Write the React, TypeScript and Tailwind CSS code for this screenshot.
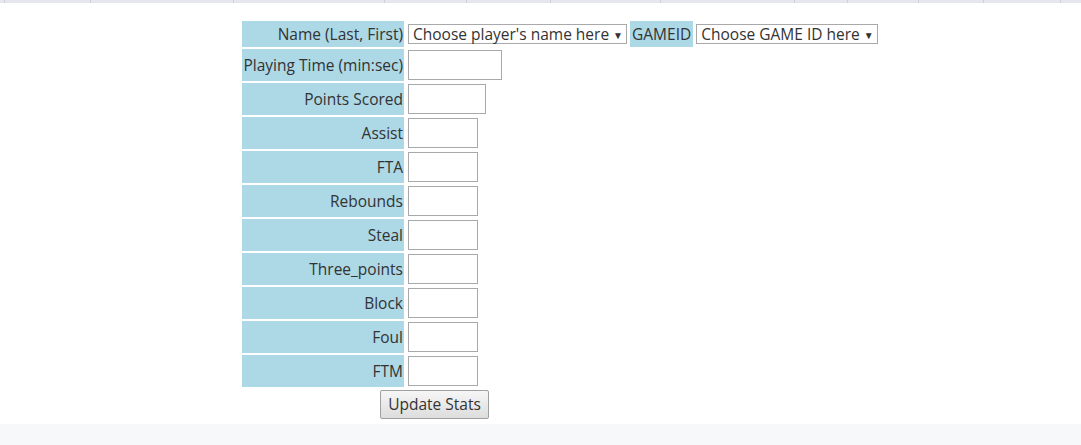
import { useState } from 'react'

const statRows = [
  { label: 'Playing Time (min:sec)', width: 'w-[94px]' },
  { label: 'Points Scored', width: 'w-[78px]' },
  { label: 'Assist', width: 'w-[70px]' },
  { label: 'FTA', width: 'w-[70px]' },
  { label: 'Rebounds', width: 'w-[70px]' },
  { label: 'Steal', width: 'w-[70px]' },
  { label: 'Three_points', width: 'w-[70px]' },
  { label: 'Block', width: 'w-[70px]' },
  { label: 'Foul', width: 'w-[70px]' },
  { label: 'FTM', width: 'w-[70px]' },
]

const tabStops = [4, 90, 233, 384, 466, 550, 660, 794, 847, 918, 983, 1060]

export default function App() {
  const [values, setValues] = useState<Record<string, string>>({})

  return (
    <div className="flex min-h-[445px] flex-col bg-white font-['Open_Sans',sans-serif] text-[15.5px] text-[#333]">
      {/* Top strip */}
      <div className="relative h-[3px] bg-[#e6e6ef]">
        {tabStops.map((x) => (
          <div
            key={x}
            className="absolute top-0 h-[3px] w-px bg-[#d0d0dc]"
            style={{ left: x }}
          />
        ))}
      </div>

      <div className="pl-[240px] pt-[16px]">
        <table className="border-separate border-spacing-[2px]">
          <tbody>
            <tr>
              <td className="h-[26px] w-[162px] bg-[#add8e6] p-0 pr-[1px] pt-[2px] text-right leading-none">
                Name (Last, First)
              </td>
              <td className="p-0 pl-[2px]">
                <div className="flex items-center gap-[3px]">
                  <button className="flex h-[20px] items-center gap-[4px] border border-[#a9a9a9] bg-white pl-[4px] pr-[3px] pt-[1px] leading-none">
                    Choose player's name here
                    <span className="text-[10px]">▼</span>
                  </button>
                  <span className="flex h-[26px] items-center bg-[#add8e6] px-[2px] pt-[2px] leading-none">
                    GAMEID
                  </span>
                  <button className="ml-[0px] flex h-[20px] items-center gap-[4px] border border-[#a9a9a9] bg-white pl-[4px] pr-[3px] pt-[1px] leading-none">
                    Choose GAME ID here
                    <span className="text-[10px]">▼</span>
                  </button>
                </div>
              </td>
            </tr>
            {statRows.map((row) => (
              <tr key={row.label}>
                <td className="h-[32px] bg-[#add8e6] p-0 pr-[1px] pt-[2px] text-right leading-none">
                  {row.label}
                </td>
                <td className="p-0 pl-[2px]">
                  <input
                    value={values[row.label] ?? ''}
                    onChange={(e) =>
                      setValues({ ...values, [row.label]: e.target.value })
                    }
                    className={`${row.width} block h-[30px] border border-[#a9a9a9] bg-white px-1 outline-none`}
                  />
                </td>
              </tr>
            ))}
          </tbody>
        </table>
        <button className="ml-[140px] mt-[1px] h-[29px] w-[109px] rounded-[2px] border border-[#a0a0a0] bg-gradient-to-b from-[#f6f6f6] to-[#dddddd] pt-[1px] leading-none">
          Update Stats
        </button>
      </div>

      <div className="mt-[5px] flex-1 bg-[#f7f8fa]" />
    </div>
  )
}
